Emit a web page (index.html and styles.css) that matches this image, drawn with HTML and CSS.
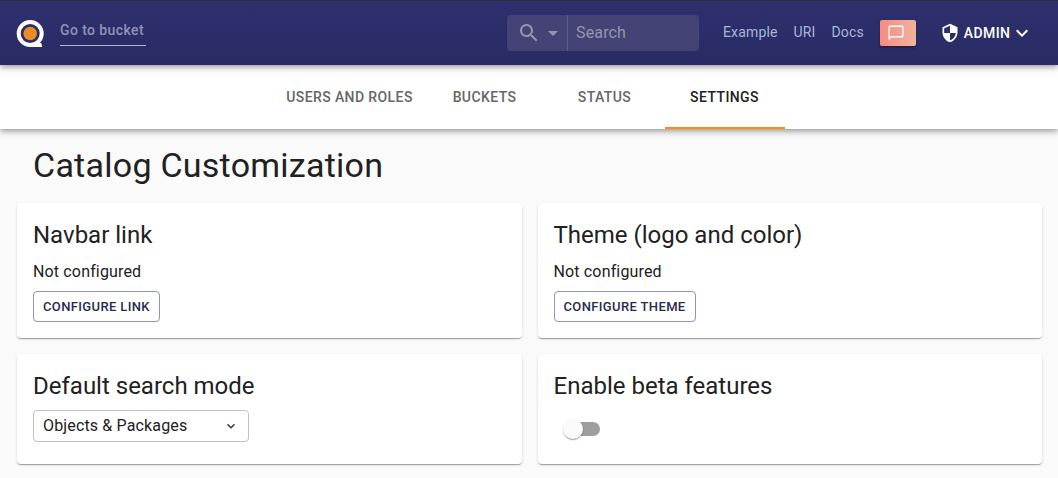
FILE: index.html
```html
<!DOCTYPE html>
<html lang="en">
<head>
<meta charset="utf-8">
<title>Catalog Customization</title>
<link rel="stylesheet" href="styles.css">
</head>
<body>
<header class="navbar">
  <svg class="logo" width="28" height="28" viewBox="0 0 28 28">
    <path d="M20 23h5.200l1.100 4H14z" fill="#fff"/>
    <circle cx="14.200" cy="13.500" r="11.500" fill="#2b2c66" stroke="#fff" stroke-width="4"/>
    <circle cx="14.200" cy="13.500" r="6.800" fill="#ec8c26"/>
  </svg>
  <span class="bucket">Go to bucket</span>
  <div class="search">
    <div class="search-mode">
      <svg width="24" height="24" viewBox="0 0 24 24" fill="currentColor"><path d="M15.5 14h-.79l-.28-.27C15.41 12.59 16 11.11 16 9.500 16 5.910 13.090 3 9.500 3S3 5.910 3 9.500 5.910 16 9.500 16c1.610 0 3.090-.59 4.230-1.570l.27.28v.79l5 4.990L20.490 19l-4.990-5zm-6 0C7.010 14 5 11.990 5 9.500S7.010 5 9.500 5 14 7.010 14 9.500 11.990 14 9.500 14z"/></svg>
      <svg width="24" height="24" viewBox="0 0 24 24" fill="currentColor"><path d="M7 10l5 5 5-5z"/></svg>
    </div>
    <span class="search-input">Search</span>
  </div>
  <nav class="links"><a>Example</a><a>URI</a><a>Docs</a></nav>
  <div class="chat">
    <svg width="18" height="18" viewBox="0 0 24 24" fill="#fff"><path d="M20 2H4c-1.100 0-2 .9-2 2v18l4-4h14c1.100 0 2-.9 2-2V4c0-1.100-.9-2-2-2zm0 14H6l-2 2V4h16v12z"/></svg>
  </div>
  <div class="user">
    <svg width="20" height="20" viewBox="0 0 24 24" fill="#fff"><path d="M12 1L3 5v6c0 5.550 3.840 10.740 9 12 5.160-1.260 9-6.450 9-12V5l-9-4zm0 10.990h7c-.53 4.120-3.280 7.790-7 8.940V12H5V6.300l7-3.110v8.800z"/></svg>
    <span>ADMIN</span>
    <svg width="24" height="24" viewBox="0 0 24 24" fill="#fff"><path d="M16.590 8.590L12 13.170 7.410 8.590 6 10l6 6 6-6z"/></svg>
  </div>
</header>
<nav class="tabs">
  <a class="tab tab-wide">USERS AND ROLES</a>
  <a class="tab">BUCKETS</a>
  <a class="tab">STATUS</a>
  <a class="tab active">SETTINGS</a>
</nav>
<main class="content">
  <h1 class="title">Catalog Customization</h1>
  <div class="cards">
    <section class="card">
      <h2 class="card-title">Navbar link</h2>
      <p class="text">Not configured</p>
      <button class="btn">CONFIGURE LINK</button>
    </section>
    <section class="card">
      <h2 class="card-title">Theme (logo and color)</h2>
      <p class="text">Not configured</p>
      <button class="btn">CONFIGURE THEME</button>
    </section>
    <section class="card">
      <h2 class="card-title">Default search mode</h2>
      <div class="select">
        <span>Objects &amp; Packages</span>
        <svg width="16" height="16" viewBox="0 0 24 24" fill="#333"><path d="M16.590 8.590L12 13.170 7.410 8.590 6 10l6 6 6-6z"/></svg>
      </div>
    </section>
    <section class="card">
      <h2 class="card-title">Enable beta features</h2>
      <div class="switch"><div class="track"><div class="thumb"></div></div></div>
    </section>
  </div>
</main>
</body>
</html>
```
FILE: styles.css
```css
* { box-sizing: border-box; }
body {
  margin: 0;
  height: 478px;
  overflow: hidden;
  background: #fafafa;
  color: #212121;
  font: 16px/24px Roboto, sans-serif;
  letter-spacing: 0.15px;
}
svg { display: block; flex: none; }
.navbar {
  position: relative;
  z-index: 2;
  display: flex;
  align-items: center;
  height: 65px;
  padding: 0 23px 0 16px;
  border-top: 1px solid #2b2c38;
  background: linear-gradient(#2d306d, #292b64);
  box-shadow: 0 2px 4px -1px rgba(0,0,0,.2), 0 4px 5px rgba(0,0,0,.14), 0 1px 10px rgba(0,0,0,.12);
}
.logo { margin-top: 2px; }
.bucket {
  width: 86px;
  height: 29px;
  margin: -4px 0 0 16px;
  padding-top: 1px;
  border-bottom: 1px solid #b6b8d2;
  color: #9193b3;
  font-size: 14px;
  font-weight: 500;
  letter-spacing: .4px;
  white-space: nowrap;
}
.search {
  display: flex;
  width: 192px;
  height: 36px;
  margin-left: 361px;
  border-radius: 4px;
  background: #434475;
  color: #9695ae;
}
.search-mode {
  display: flex;
  align-items: center;
  width: 61px;
  padding-left: 10px;
  border-right: 1px solid #5e5f88;
}
.search-input { padding: 6px 8px; }
.links {
  display: flex;
  gap: 16px;
  margin: -2px 0 0 24px;
  color: #a9b6d8;
  font-size: 14px;
  letter-spacing: .15px;
}
.chat {
  display: grid;
  place-items: center;
  width: 36px;
  height: 26px;
  margin-left: 16px;
  padding-right: 3px;
  border-radius: 2px;
  background: linear-gradient(90deg, #f88b82, #f1b39c);
  box-shadow: 0 2px 3px rgba(0,0,0,.3);
}
.user {
  display: flex;
  align-items: center;
  margin-left: 24px;
  color: #fff;
  font-size: 14px;
  font-weight: 500;
  letter-spacing: .4px;
}
.user span { margin-left: 4px; }
.tabs {
  position: relative;
  z-index: 1;
  display: flex;
  justify-content: center;
  height: 64px;
  padding-left: 1px;
  background: #fff;
  box-shadow: 0 2px 4px -1px rgba(0,0,0,.2), 0 4px 5px rgba(0,0,0,.14), 0 1px 10px rgba(0,0,0,.12);
}
.tab {
  display: grid;
  place-items: center;
  width: 120px;
  border-bottom: 2px solid transparent;
  padding: 2px 1px 0 0;
  color: #666;
  font-size: 14px;
  font-weight: 500;
  letter-spacing: .4px;
}
.tab-wide { width: 151px; padding-right: 0; }
.active { border-color: #ff8f00; color: #212121; }
.content { padding: 15px 16px 0 17px; }
.title {
  margin: 0 0 17px 16px;
  font-size: 34px;
  font-weight: 400;
  line-height: 42px;
  letter-spacing: .25px;
}
.cards {
  display: grid;
  grid-template-columns: 1fr 1fr;
  gap: 16px;
}
.card {
  padding: 16px;
  border-radius: 4px;
  background: #fff;
  box-shadow: 0 2px 1px -1px rgba(0,0,0,.2), 0 1px 1px rgba(0,0,0,.14), 0 1px 3px rgba(0,0,0,.12);
}
.card-title {
  margin: 0 0 8px;
  font-size: 24px;
  font-weight: 400;
  line-height: 32px;
  letter-spacing: 0;
}
.text { margin: 9px 0 7px; }
.btn {
  display: block;
  height: 31px;
  padding: 3px 9px;
  border: 1px solid #9495b2;
  border-radius: 4px;
  background: none;
  color: #282b50;
  font: 500 13px/23px Roboto, sans-serif;
  letter-spacing: .37px;
}
.select {
  display: flex;
  align-items: center;
  justify-content: space-between;
  width: 216px;
  height: 32px;
  padding: 0 9px;
  border: 1px solid #c1c1c1;
  border-radius: 4px;
}
.switch {
  width: 58px;
  height: 38px;
  padding: 12px;
}
.track {
  display: flex;
  align-items: center;
  height: 14px;
  border-radius: 7px;
  background: #9e9e9e;
}
.thumb {
  flex: none;
  width: 20px;
  height: 20px;
  margin-left: -3px;
  border-radius: 50%;
  background: #fafafa;
  box-shadow: 0 2px 1px -1px rgba(0,0,0,.2), 0 1px 1px rgba(0,0,0,.14), 0 1px 3px rgba(0,0,0,.12);
}
```
